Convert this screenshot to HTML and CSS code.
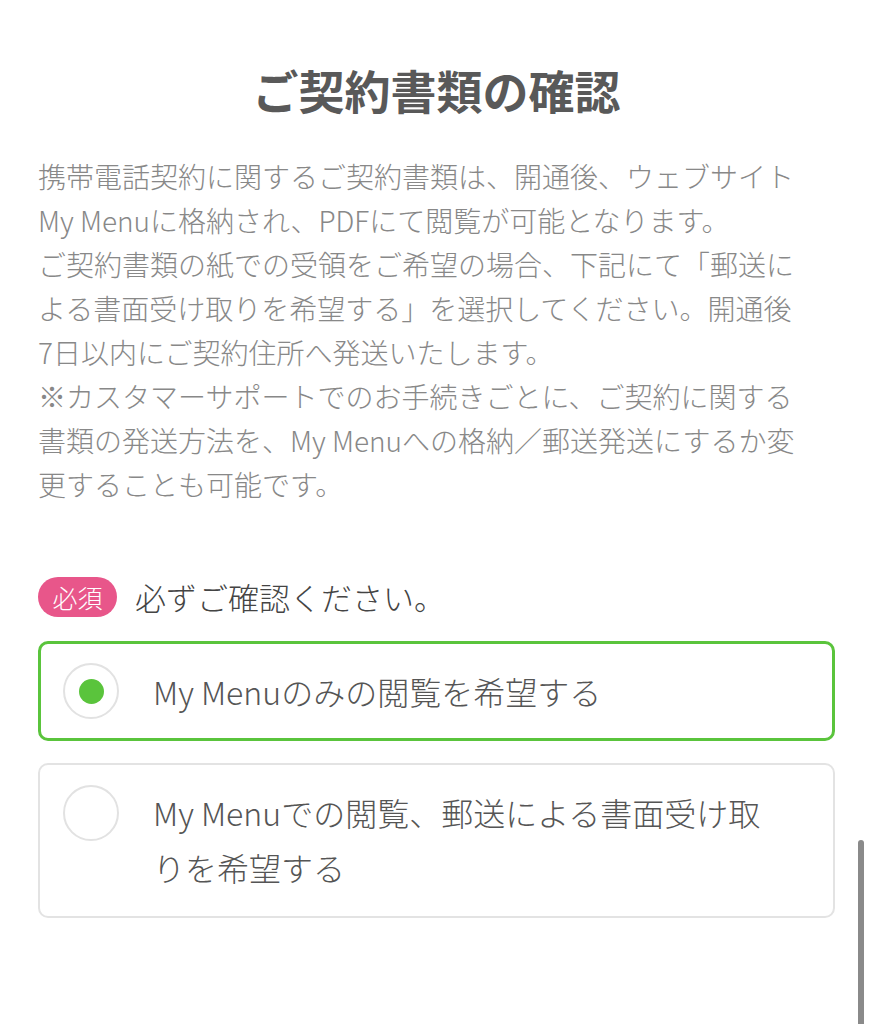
FILE: index.html
```html
<!DOCTYPE html>
<html lang="ja">

<head>
    <meta charset="UTF-8">
    <meta name="viewport" content="width=device-width, initial-scale=1.0">
    <title>ご契約書類の確認</title>

    <link rel="stylesheet" href="styles.css">
</head>

<body>
    <section class="contract">
        <h1 class="contract-title">ご契約書類の確認</h1>

        <p class="contract-note">
            携帯電話契約に関するご契約書類は、開通後、ウェブサイト<br>
            My Menuに格納され、PDFにて閲覧が可能となります。<br>
            ご契約書類の紙での受領をご希望の場合、下記にて「郵送に<br>
            よる書面受け取りを希望する」を選択してください。開通後<br>
            7日以内にご契約住所へ発送いたします。<br>
            ※カスタマーサポートでのお手続きごとに、ご契約に関する<br>
            書類の発送方法を、My Menuへの格納／郵送発送にするか変<br>
            更することも可能です。
        </p>

        <div class="question">
            <span class="badge">必須</span>
            <span class="question-text">必ずご確認ください。</span>
        </div>

        <form class="options">
            <label class="option is-checked">
                <input type="radio" name="delivery" value="mymenu" checked>
                <span class="radio"></span>
                <span class="option-text">My Menuのみの閲覧を希望する</span>
            </label>
            <label class="option">
                <input type="radio" name="delivery" value="post">
                <span class="radio"></span>
                <span class="option-text">My Menuでの閲覧、郵送による書面受け取りを希望する</span>
            </label>
        </form>
    </section>

    <div class="scrollbar"></div>
</body>

</html>
```

FILE: styles.css
```css
body {
    margin: 0;
    background: #fff;
    font-family: "Noto Sans CJK JP", "Noto Sans", sans-serif;
}

.contract {
    padding: 57px 38px 0;
}

.contract-title {
    margin: 0;
    text-align: center;
    font-size: 46px;
    line-height: 64px;
    font-weight: bold;
    color: #595959;
}

.contract-note {
    margin: 33px 0 0;
    font-size: 28px;
    line-height: 44px;
    font-weight: 300;
    color: #888;
}

.question {
    display: flex;
    align-items: center;
    gap: 18px;
    margin-top: 68px;
}

.badge {
    display: flex;
    align-items: center;
    justify-content: center;
    width: 79px;
    height: 40px;
    border-radius: 20px;
    background: #e8568a;
    color: #fff;
    font-size: 25px;
    font-weight: 300;
}

.question-text {
    font-size: 31px;
    font-weight: 300;
    color: #444;
}

.options {
    display: flex;
    flex-direction: column;
    gap: 22px;
    margin-top: 22px;
}

.option {
    display: flex;
    align-items: flex-start;
    gap: 34px;
    padding: 20px 56px 21px 23px;
    border: 2px solid #e3e3e3;
    border-radius: 10px;
    cursor: pointer;
}

.option.is-checked {
    align-items: center;
    padding: 19px 56px 19px 22px;
    border: 3px solid #5ac43c;
}

.option input {
    display: none;
}

.radio {
    flex: none;
    display: flex;
    align-items: center;
    justify-content: center;
    width: 52px;
    height: 52px;
    border: 2px solid #e2e2e2;
    border-radius: 50%;
}

.option input:checked + .radio::after {
    content: "";
    width: 25px;
    height: 25px;
    border-radius: 50%;
    background: #5ac43c;
}

.option-text {
    font-size: 32px;
    line-height: 55px;
    font-weight: 300;
    color: #555;
}

.scrollbar {
    position: fixed;
    right: 9px;
    bottom: 0;
    width: 6px;
    height: 184px;
    border-radius: 3px 3px 0 0;
    background: #8a8a8a;
}
```
